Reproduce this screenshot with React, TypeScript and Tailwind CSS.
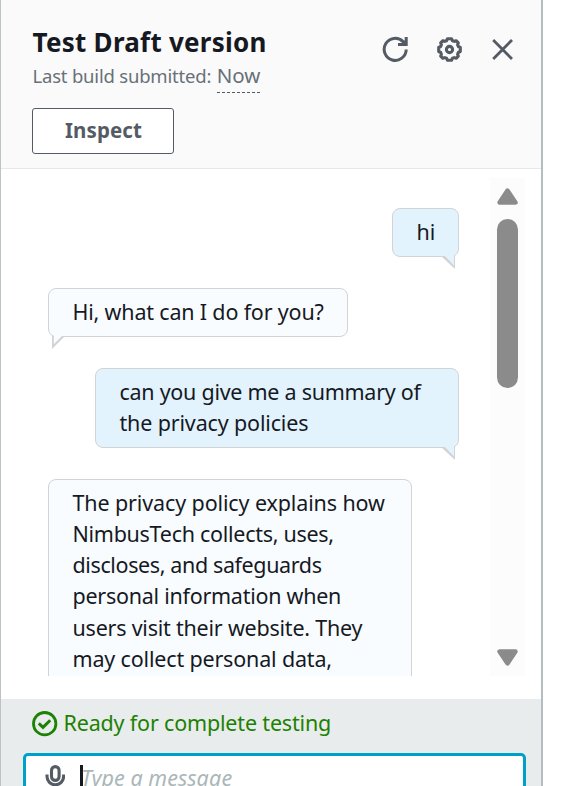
import React from "react";

type Line = { text: string; tracking: string };
type Message = { from: "user" | "bot"; width: string; lines: Line[]; tail: boolean };

const messages: Message[] = [
  { from: "user", width: "w-[67px]", tail: true, lines: [{ text: "hi", tracking: "tracking-[0px]" }] },
  { from: "bot", width: "w-[300px]", tail: true, lines: [{ text: "Hi, what can I do for you?", tracking: "tracking-[-0.18px]" }] },
  {
    from: "user",
    width: "w-[364px]",
    tail: true,
    lines: [
      { text: "can you give me a summary of", tracking: "tracking-[-0.27px]" },
      { text: "the privacy policies", tracking: "tracking-[-0.15px]" },
    ],
  },
  {
    from: "bot",
    width: "w-[364px]",
    tail: false,
    lines: [
      { text: "The privacy policy explains how", tracking: "tracking-[-0.12px]" },
      { text: "NimbusTech collects, uses,", tracking: "tracking-[-0.28px]" },
      { text: "discloses, and safeguards", tracking: "tracking-[-0.38px]" },
      { text: "personal information when", tracking: "tracking-[-0.26px]" },
      { text: "users visit their website. They", tracking: "tracking-[-0.22px]" },
      { text: "may collect personal data,", tracking: "tracking-[-0.17px]" },
    ],
  },
];

function Bubble({ from, width, lines, tail }: Message) {
  const user = from === "user";
  return (
    <div
      className={`relative shrink-0 rounded-lg border border-[#d1d3d4] px-[23.5px] pb-[9.2px] pt-[6.6px] ${width} ${
        user ? "self-end bg-[#e2f3fe]" : "self-start bg-[#f8fcff]"
      }`}
    >
      {lines.map((line) => (
        <p key={line.text} className={`whitespace-nowrap text-[21.5px] leading-[31.2px] text-[#16191f] ${line.tracking}`}>
          {line.text}
        </p>
      ))}
      {tail && (
        <svg
          className={`absolute -bottom-[13px] h-[14px] w-[14px] ${user ? "right-[3px]" : "left-[3px]"}`}
          viewBox="0 0 14 14"
        >
          {user ? (
            <>
              <path d="M0 1H14V14Z" fill="#d1d3d4" />
              <path d="M3 0H13V10.5Z" fill="#e2f3fe" />
            </>
          ) : (
            <>
              <path d="M0 1H13L0 14Z" fill="#d1d3d4" />
              <path d="M1.8 0H11L1.8 9.2Z" fill="#f8fcff" />
            </>
          )}
        </svg>
      )}
    </div>
  );
}

function RefreshIcon() {
  return (
    <svg className="h-[26px] w-[26px]" viewBox="0 0 26 26" fill="none" stroke="#545b64" strokeWidth="3">
      <path d="M24.2 13.5A11 11 0 1 1 21 5.6L23.5 8" />
      <path d="M24.2 1V8.4H16" />
      <path d="M20.5 5L24.5 4V8.5H21Z" fill="#545b64" stroke="none" />
    </svg>
  );
}

function GearIcon() {
  return (
    <svg className="h-[26px] w-[26px]" viewBox="0 0 26 26" fill="none" stroke="#545b64" strokeWidth="3.1" strokeLinejoin="round">
      <g transform="translate(0.5 0.5)">
        <path d="M11 2.2H15L16 4.2L17.8 4.9L19.6 4.2L21.8 6.4L21.1 8.2L21.8 10L23.8 11V15L21.8 16L21.1 17.8L21.8 19.6L19.6 21.8L17.8 21.1L16 21.8L15 23.8H11L10 21.8L8.2 21.1L6.4 21.8L4.2 19.6L4.9 17.8L4.2 16L2.2 15V11L4.2 10L4.9 8.2L4.2 6.4L6.4 4.2L8.2 4.9L10 4.2Z" />
        <circle cx="13" cy="13" r="3.1" />
      </g>
    </svg>
  );
}

function CloseIcon() {
  return (
    <svg className="h-[26px] w-[26px]" viewBox="0 0 26 26" fill="none" stroke="#545b64" strokeWidth="2.8">
      <path d="M3.2 4L22 23M22 4L3.2 23" />
    </svg>
  );
}

function Scrollbar() {
  return (
    <div className="flex h-[498px] w-[35px] shrink-0 flex-col items-center bg-[#fcfcfc]">
      <svg className="mt-[10px] h-[17px] w-[21px]" viewBox="0 0 21 17">
        <path d="M10.5 2.5L18.5 14.5H2.5Z" fill="#8b8b8b" stroke="#8b8b8b" strokeWidth="4.4" strokeLinejoin="round" />
      </svg>
      <div className="mt-[14px] h-[169px] w-[21px] rounded-full bg-[#8b8b8b]" />
      <svg className="mb-[10px] mt-auto h-[17px] w-[21px] rotate-180" viewBox="0 0 21 17">
        <path d="M10.5 2.5L18.5 14.5H2.5Z" fill="#8b8b8b" stroke="#8b8b8b" strokeWidth="4.4" strokeLinejoin="round" />
      </svg>
    </div>
  );
}

export default function App() {
  return (
    <div className="h-[786px] w-[576px] overflow-hidden bg-white font-['Noto_Sans',sans-serif]">
      <section className="flex h-full w-[543px] flex-col border-l border-r-2 border-l-[#bcc2c6] border-r-[#b5bdc1]">
        <header className="flex h-[169px] shrink-0 justify-between border-b border-[#e6e8e9] bg-[#fafafa] pl-[31px] pr-[25px]">
          <div className="flex flex-col items-start">
            <h1 className="mt-[24px] whitespace-nowrap pl-[0.5px] text-[26px] font-bold leading-[36px] tracking-[0.26px] text-[#16191f]">
              Test Draft version
            </h1>
            <div className="mt-px flex h-[32px] items-start whitespace-nowrap leading-[30px] text-[#687078]">
              <span className="pl-[0.5px] text-[18.5px] tracking-[-0.2px]">Last build submitted:</span>
              <span className="ml-[5.5px] h-[32px] border-b border-dashed border-[#545b64] text-[20.5px] leading-[29px] tracking-[0px]">Now</span>
            </div>
            <button className="mt-[15px] h-[46px] w-[142px] rounded-[3px] border border-[#545b64] bg-white pb-[2px] pl-px text-[20.5px] font-bold tracking-[0.1px] text-[#545b64]">
              Inspect
            </button>
          </div>
          <div className="mt-[36px] flex h-[26px] gap-[28px]">
            <RefreshIcon />
            <GearIcon />
            <CloseIcon />
          </div>
        </header>

        <main className="flex h-[530px] shrink-0 pl-[47px] pr-[16px] pt-[9px]">
          <div className="flex h-[498px] w-[411px] flex-col gap-[31px] overflow-hidden pt-[30px]">
            {messages.map((m) => (
              <Bubble key={m.lines[0].text} {...m} />
            ))}
          </div>
          <div className="ml-auto">
            <Scrollbar />
          </div>
        </main>

        <footer className="flex grow flex-col bg-[#e8ecec] px-[22px]">
          <div className="flex h-[54px] shrink-0 items-start pl-[9px] pt-[12px]">
            <svg className="h-[26px] w-[26px]" viewBox="0 0 26 26" fill="none" stroke="#1d8102" strokeWidth="2.8">
              <circle cx="12.7" cy="12.7" r="11.2" />
              <path d="M6.8 12.4L11 16.3L18.2 9.2" strokeWidth="3" />
            </svg>
            <span className="-mt-[3px] ml-[5.5px] whitespace-nowrap text-[21.5px] leading-[30px] tracking-[-0.17px] text-[#1d8102]">
              Ready for complete testing
            </span>
          </div>
          <div className="flex h-[64px] w-[503px] shrink-0 items-start rounded-[5px] border-[3px] border-[#00a1c9] bg-white pl-[19px] pt-[9px]">
            <svg className="h-[28px] w-[20px]" viewBox="0 0 20 28" fill="none" stroke="#545b64" strokeWidth="3.1">
              <rect x="6.5" y="1.6" width="7.6" height="13.8" rx="3.8" />
              <path d="M2 9.5V11.5A8.3 8.3 0 0 0 18.6 11.5V9.5M10.3 19.7V27" />
            </svg>
            <span className="ml-[15px] h-[26px] w-[3px] bg-[#16191f]" />
            <span className="-ml-[2px] -mt-[2px] whitespace-nowrap text-[21.5px] italic leading-[30px] tracking-[0.05px] text-[#aab7b8]">
              Type a message
            </span>
          </div>
        </footer>
      </section>
    </div>
  );
}
